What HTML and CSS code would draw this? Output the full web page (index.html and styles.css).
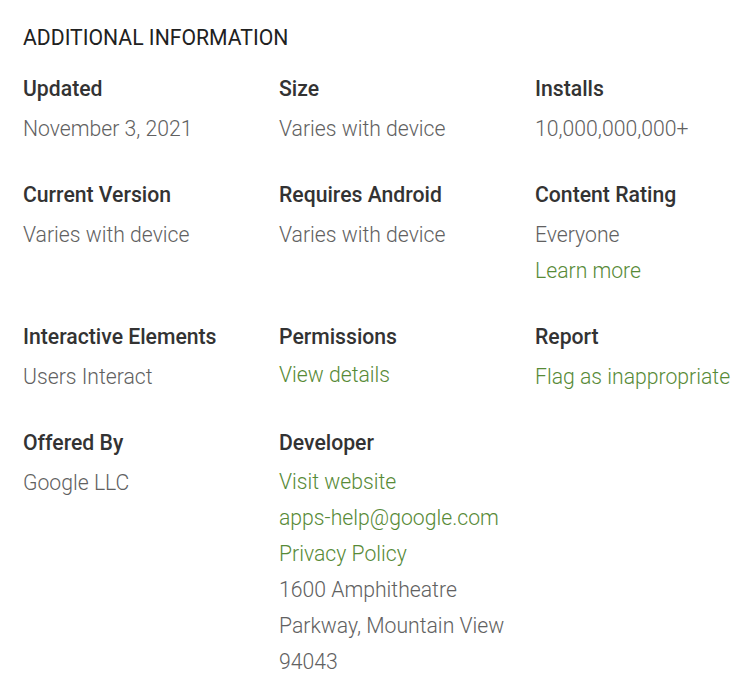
FILE: index.html
```html
<!DOCTYPE html>
<html lang="en">
    <head>
        <link rel="stylesheet" href="styles.css">
    </head>

    <body>
        <div class="info">
            <h2 class="title">ADDITIONAL INFORMATION</h2>

            <div class="grid">
                <div class="item">
                    <div class="label">Updated</div>
                    <div class="value">November 3, 2021</div>
                </div>
                <div class="item">
                    <div class="label">Size</div>
                    <div class="value">Varies with device</div>
                </div>
                <div class="item">
                    <div class="label">Installs</div>
                    <div class="value">10,000,000,000+</div>
                </div>

                <div class="item">
                    <div class="label">Current Version</div>
                    <div class="value">Varies with device</div>
                </div>
                <div class="item">
                    <div class="label">Requires Android</div>
                    <div class="value">Varies with device</div>
                </div>
                <div class="item">
                    <div class="label">Content Rating</div>
                    <div class="value">Everyone</div>
                    <div class="value"><a class="link" href="#">Learn more</a></div>
                </div>

                <div class="item">
                    <div class="label">Interactive Elements</div>
                    <div class="value">Users Interact</div>
                </div>
                <div class="item">
                    <div class="label">Permissions</div>
                    <div class="value link-first"><a class="link" href="#">View details</a></div>
                </div>
                <div class="item">
                    <div class="label">Report</div>
                    <div class="value"><a class="link" href="#">Flag as inappropriate</a></div>
                </div>

                <div class="item">
                    <div class="label">Offered By</div>
                    <div class="value">Google LLC</div>
                </div>
                <div class="item">
                    <div class="label">Developer</div>
                    <div class="value dev-first"><a class="link" href="#">Visit website</a></div>
                    <div class="value"><a class="link" href="#">apps-help@google.com</a></div>
                    <div class="value"><a class="link" href="#">Privacy Policy</a></div>
                    <div class="value">1600 Amphitheatre<br>Parkway, Mountain View<br>94043</div>
                </div>
            </div>
        </div>
    </body>
</html>
```

FILE: styles.css
```css
@charset "UTF-8";
body {
    margin: 0;
    background-color: #fff;
    font-family: Roboto, "Liberation Sans", sans-serif;
}
.info {
    padding: 20px 0 0 23px;
}
.title {
    margin: 0 0 15px 0;
    font-size: 21.2px;
    font-weight: 400;
    line-height: 36px;
    color: #212121;
}
.grid {
    display: grid;
    grid-template-columns: 256px 256px 215px;
    row-gap: 30px;
}
.label {
    font-size: 21.2px;
    font-weight: 500;
    line-height: 36px;
    margin-bottom: 4px;
    color: #333;
}
.value {
    font-size: 21.2px;
    font-weight: 300;
    line-height: 36px;
    color: #616161;
}
.link-first {
    margin-top: -2px;
}
.dev-first {
    margin-top: -1px;
}
.link {
    color: #578a37;
    text-decoration: none;
}
```
